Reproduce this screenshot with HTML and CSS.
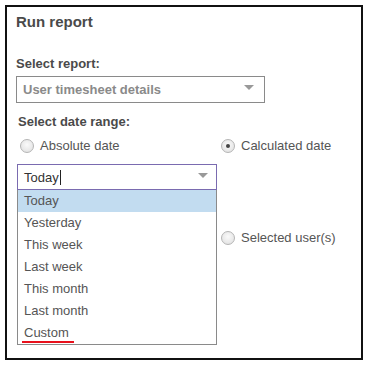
FILE: index.html
```html
<!DOCTYPE html>
<html>
<head>
<meta charset="utf-8">
<link rel="stylesheet" href="styles.css">
</head>
<body>
<div class="panel">
  <h2 class="title">Run report</h2>
  <div class="label">Select report:</div>
  <div class="select">
    <span class="select-text">User timesheet details</span>
    <span class="arrow"></span>
  </div>
  <div class="label label-range">Select date range:</div>
  <div class="radio-row">
    <label class="radio"><span class="dot"></span>Absolute date</label>
    <label class="radio"><span class="dot checked"></span>Calculated date</label>
  </div>
  <div class="combo-wrap">
    <div class="combo">
      <span class="combo-text">Today<span class="caret"></span></span>
      <span class="arrow"></span>
    </div>
    <ul class="listbox">
      <li class="opt active">Today</li>
      <li class="opt">Yesterday</li>
      <li class="opt">This week</li>
      <li class="opt">Last week</li>
      <li class="opt">This month</li>
      <li class="opt">Last month</li>
      <li class="opt"><span class="marked">Custom</span></li>
    </ul>
  </div>
  <div class="radio-row users-row">
    <span class="cell"></span>
    <label class="radio"><span class="dot"></span>Selected user(s)</label>
  </div>
</div>
</body>
</html>
```
FILE: styles.css
```css
* { box-sizing: border-box; }
html, body { margin: 0; padding: 0; background: #fff; }
body {
  font-family: "Liberation Sans", Arial, sans-serif;
  color: #555;
}
.panel {
  position: relative;
  margin: 5px;
  width: 358px;
  height: 355px;
  border: 2px solid #111;
  padding: 6px 0 0 9px;
}
.title {
  margin: 0;
  font-size: 15px;
  line-height: 17px;
  font-weight: bold;
  color: #4a4a4a;
}
.label {
  margin-top: 26px;
  font-size: 13px;
  line-height: 15px;
  font-weight: bold;
  color: #4a4a4a;
}
.select {
  margin-top: 5px;
  width: 249px;
  height: 27px;
  border: 1px solid #8a8a8a;
  display: flex;
  align-items: center;
  justify-content: space-between;
  padding: 0 10px 0 6px;
}
.select-text {
  font-size: 13px;
  font-weight: bold;
  color: #8a8a8a;
}
.arrow {
  width: 0;
  height: 0;
  border-left: 5px solid transparent;
  border-right: 5px solid transparent;
  border-top: 5px solid #999;
  margin-top: -4px;
}
.label-range {
  margin-top: 11px;
  margin-left: 2px;
}
.radio-row {
  display: grid;
  grid-template-columns: 201px auto;
  margin-top: 9px;
  padding-left: 4px;
}
.radio {
  display: flex;
  align-items: center;
  font-size: 13px;
  line-height: 15px;
  color: #555;
}
.dot {
  width: 14px;
  height: 14px;
  border-radius: 50%;
  border: 1px solid #b5b5b5;
  background: radial-gradient(circle at 50% 40%, #fafafa 0%, #e6e6e6 70%, #d8d8d8 100%);
  margin-right: 6px;
  display: flex;
  align-items: center;
  justify-content: center;
}
.dot.checked::after {
  content: "";
  width: 4px;
  height: 4px;
  border-radius: 50%;
  background: #444;
}
.combo-wrap {
  position: relative;
  margin-top: 11px;
  margin-left: 1px;
  width: 200px;
  z-index: 2;
}
.combo {
  height: 26px;
  border: 1px solid #7a6bb0;
  display: flex;
  align-items: center;
  justify-content: space-between;
  padding: 0 8px 0 6px;
}
.combo-text {
  font-size: 13px;
  color: #333;
  display: flex;
  align-items: center;
}
.caret {
  display: inline-block;
  width: 1px;
  height: 15px;
  background: #222;
  margin-left: 1px;
}
.listbox {
  position: absolute;
  left: 0;
  top: 100%;
  width: 200px;
  margin: 0;
  padding: 0;
  list-style: none;
  background: #fff;
  border: 1px solid #8a8a8a;
  border-top: 0;
}
.opt {
  height: 22px;
  line-height: 22px;
  padding-left: 6px;
  font-size: 13px;
  color: #555;
}
.opt.active {
  background: #c2dcf0;
}
.marked {
  display: inline-block;
  position: relative;
  line-height: 15px;
}
.marked::after {
  content: "";
  position: absolute;
  left: -2px;
  right: -5px;
  bottom: -3px;
  height: 2px;
  background: #e8101c;
}
.users-row {
  margin-top: 40px;
}
```
